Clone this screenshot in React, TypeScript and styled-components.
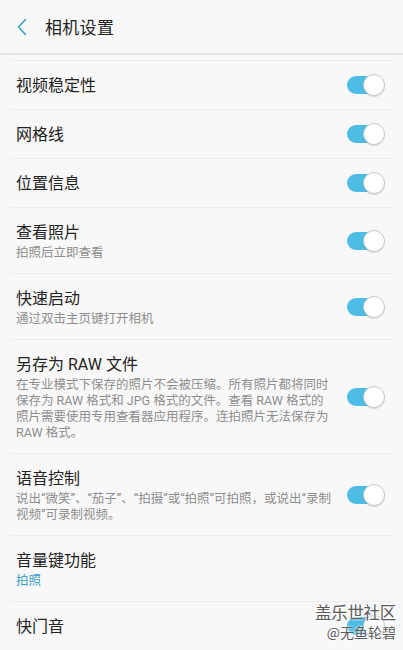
import { createGlobalStyle, styled } from "styled-components"

const GlobalStyle = createGlobalStyle`
  html, body {
    margin: 0;
    padding: 0;
    background: #f8f8f8;
  }
  body {
    font-family: Roboto, "Noto Sans CJK SC", sans-serif;
    width: 403px;
    height: 650px;
    overflow: hidden;
  }
`

type Setting = {
  title: string
  sub?: string
  blue?: boolean
  toggle: boolean
}

const settings: Setting[] = [
  { title: "视频稳定性", toggle: true },
  { title: "网格线", toggle: true },
  { title: "位置信息", toggle: true },
  { title: "查看照片", sub: "拍照后立即查看", toggle: true },
  { title: "快速启动", sub: "通过双击主页键打开相机", toggle: true },
  {
    title: "另存为 RAW 文件",
    sub: "在专业模式下保存的照片不会被压缩。所有照片都将同时保存为 RAW 格式和 JPG 格式的文件。查看 RAW 格式的照片需要使用专用查看器应用程序。连拍照片无法保存为 RAW 格式。",
    toggle: true,
  },
  {
    title: "语音控制",
    sub: "说出“微笑”、“茄子”、“拍摄”或“拍照”可拍照，或说出“录制视频”可录制视频。",
    toggle: true,
  },
  { title: "音量键功能", sub: "拍照", blue: true, toggle: false },
  { title: "快门音", toggle: true },
]

const App = () => {
  return (
    <Page>
      <GlobalStyle />
      <Header>
        <BackBtn aria-label="back">
          <svg width="12" height="18" viewBox="0 0 12 18">
            <path d="M9.5 1.5 L2.5 9 L9.5 16.5" fill="none" stroke="#3f9fc7" strokeWidth="1.6" strokeLinecap="round" strokeLinejoin="round" />
          </svg>
        </BackBtn>
        <Title>相机设置</Title>
      </Header>
      <List>
        {settings.map((each, index) => (
          <Row key={index}>
            <TextCol>
              <RowTitle>{each.title}</RowTitle>
              {each.sub ? <RowSub $blue={each.blue}>{each.sub}</RowSub> : null}
            </TextCol>
            {each.toggle ? (
              <Switch>
                <Knob />
              </Switch>
            ) : null}
          </Row>
        ))}
      </List>
      <Watermark>
        <span className="big">盖乐世社区</span>
        <span className="small">@无鱼轮碧</span>
      </Watermark>
    </Page>
  )
}

const Page = styled.div`
  position: relative;
  width: 403px;
  height: 650px;
  background: #f8f8f8;
  overflow: hidden;
`

const Header = styled.header`
  height: 53px;
  display: flex;
  align-items: center;
  border-bottom: 2px solid #e3e3e3;
  box-sizing: content-box;
`

const BackBtn = styled.div`
  width: 45px;
  display: flex;
  justify-content: flex-start;
  padding-left: 16px;
  box-sizing: border-box;
  padding-top: 1px;
`

const Title = styled.h1`
  margin: 0;
  font-size: 17px;
  font-weight: 400;
  color: #222;
  letter-spacing: 0.3px;
`

const List = styled.div`
  margin: 5px 10px 0;
  border-top: 1px solid #ececec;
`

const Row = styled.div`
  display: flex;
  align-items: center;
  justify-content: space-between;
  padding: 14px 8px 12px 6px;
  border-bottom: 1px solid #ececec;
  min-height: 22px;
`

const TextCol = styled.div`
  display: flex;
  flex-direction: column;
  width: 316px;
`

const RowTitle = styled.div`
  font-size: 16px;
  line-height: 22px;
  color: #232323;
`

const RowSub = styled.div<{ $blue?: boolean }>`
  font-size: 12.5px;
  line-height: 16px;
  color: ${({ $blue }) => ($blue ? "#3a9cc6" : "#8e8e8e")};
  margin-top: 1px;
`

const Switch = styled.div`
  position: relative;
  width: 38px;
  height: 22px;
  margin-top: -2px;
  flex-shrink: 0;

  &::before {
    content: "";
    position: absolute;
    left: 0;
    top: 2px;
    width: 34px;
    height: 18px;
    border-radius: 9px;
    background: #4dbde6;
  }
`

const Knob = styled.div`
  position: absolute;
  right: 0;
  top: 0;
  width: 20px;
  height: 20px;
  border-radius: 50%;
  background: #ffffff;
  border: 1px solid #c9c9c9;
  box-shadow: 0 1px 1px rgba(0, 0, 0, 0.12);
`

const Watermark = styled.div`
  position: absolute;
  right: 7px;
  bottom: 8px;
  display: flex;
  flex-direction: column;
  align-items: flex-end;
  font-family: "Noto Sans CJK SC", sans-serif;
  color: #5b5b5b;
  text-shadow: 0 0 2px #fff, 0 0 2px #fff;

  .big {
    font-size: 16.5px;
    line-height: 20px;
    letter-spacing: -0.3px;
  }
  .small {
    font-size: 14px;
    line-height: 19px;
    margin-top: 1px;
  }
`

export default App
